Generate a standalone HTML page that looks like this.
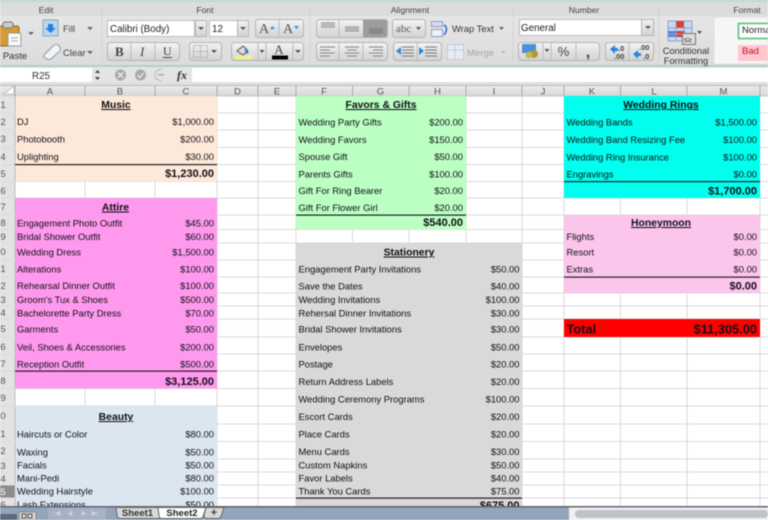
<!DOCTYPE html>
<html><head><meta charset="utf-8"><style>
html,body{margin:0;padding:0;background:#fff;overflow:hidden;width:768px;height:520px}
svg{display:block;filter:blur(.45px)}
text{font-family:"Liberation Sans",sans-serif;font-size:9.4px;fill:#101016}
.r text,text.r{text-anchor:end}
.c text,text.c{text-anchor:middle}
.h text{font-size:9.6px;fill:#555;text-anchor:middle}
.b{font-weight:bold;font-size:11px}
.u{font-weight:bold;font-size:10.4px;text-decoration:underline;text-anchor:middle}
.lab text{font-size:8.6px;fill:#444;text-anchor:middle}
.g line{stroke:#dadada;stroke-width:1}
.btn{fill:url(#bt);stroke:#b4b4b4}
.ln line{stroke:#a8a8a8;stroke-width:1}
</style></head><body>
<svg width="768" height="520" viewBox="0 0 768 520" xmlns="http://www.w3.org/2000/svg">
<defs>
<linearGradient id="rib" x1="0" y1="0" x2="0" y2="1"><stop offset="0" stop-color="#e9e9e9"/><stop offset="1" stop-color="#dcdcdc"/></linearGradient>
<linearGradient id="bt" x1="0" y1="0" x2="0" y2="1"><stop offset="0" stop-color="#f3f3f3"/><stop offset="1" stop-color="#d2d2d2"/></linearGradient>
<linearGradient id="hd" x1="0" y1="0" x2="0" y2="1"><stop offset="0" stop-color="#ececec"/><stop offset="1" stop-color="#d8d8d8"/></linearGradient>
</defs>
<rect width="768" height="520" fill="#fff"/>
<!-- ribbon -->
<rect width="768" height="66" fill="url(#rib)"/>
<rect width="768" height="16" fill="#dcdcdc"/>
<rect width="768" height="1.500" fill="#b9d4bd"/>
<rect y="65" width="768" height="2" fill="#b5cfb8"/>
<g class="lab"><text x="46" y="13">Edit</text><text x="205" y="13">Font</text><text x="410" y="13">Alignment</text><text x="584" y="13">Number</text><text x="747" y="13">Format</text></g>
<g stroke="#bbb" stroke-dasharray="1 2"><line x1="102" y1="8" x2="102" y2="62"/><line x1="310" y1="8" x2="310" y2="62"/><line x1="513" y1="8" x2="513" y2="62"/><line x1="659" y1="8" x2="659" y2="62"/></g>
<!-- paste -->
<rect x="-4" y="26" width="23" height="20" rx="2" fill="#d79a35" stroke="#8a6a2a"/>
<rect x="3" y="22" width="10" height="6" rx="2" fill="#ccc" stroke="#777"/>
<path d="M8 33h12l1 2v11H8z" fill="#fafafa" stroke="#999"/>
<path d="M11 38h7M11 41h7" stroke="#aaa"/>
<path d="M28 32h6l-3 3z" fill="#666"/>
<text x="15" y="59" text-anchor="middle" style="font-size:9.500px;fill:#333">Paste</text>
<!-- fill -->
<rect x="43" y="20" width="15" height="16" rx="1" fill="#bcd7f2" stroke="#8aa"/>
<path d="M48 24h5v4h3l-5.500 5-5.500-5h3z" fill="#2b7fd8"/>
<text x="63" y="32" style="font-size:9.500px;fill:#444">Fill</text>
<path d="M87 27h6l-3 3z" fill="#666"/>
<!-- clear -->
<path d="M44 55l10-10q2-1.500 4 0l2 2q1 2 0 4l-9 8q-2 1-4 0l-3-2q-1-1 0-2z" fill="#f0f3f7" stroke="#8d98a8"/>
<text x="63" y="56" style="font-size:9.500px;fill:#444">Clear</text>
<path d="M87 51h6l-3 3z" fill="#666"/>
<!-- font -->
<rect x="107.500" y="20.500" width="87" height="16" fill="#fff" stroke="#bbb"/><text x="110" y="32" style="font-size:9.800px;fill:#222">Calibri (Body)</text>
<rect x="195.500" y="20.500" width="11" height="16" class="btn"/><path d="M198 27h6l-3 3z" fill="#555"/>
<rect x="209.500" y="20.500" width="28" height="16" fill="#fff" stroke="#bbb"/><text x="212" y="32" style="font-size:9.800px;fill:#222">12</text>
<rect x="237.500" y="20.500" width="11" height="16" class="btn"/><path d="M240 27h6l-3 3z" fill="#555"/>
<rect x="255.500" y="19.500" width="48" height="18" rx="3" class="btn"/><line x1="279" y1="20" x2="279" y2="37" stroke="#bbb"/>
<text x="259" y="33" style="font-family:'Liberation Serif',serif;font-size:14px;fill:#555">A</text><path d="M270 29h5l-2.500-3z" fill="#3a8fd8"/>
<text x="283" y="33" style="font-family:'Liberation Serif',serif;font-size:14px;fill:#555">A</text><path d="M294 26h5l-2.500 3z" fill="#3a8fd8"/>
<rect x="107.500" y="42.500" width="72" height="18" rx="3" class="btn"/><line x1="131" y1="43" x2="131" y2="60" stroke="#bbb"/><line x1="155" y1="43" x2="155" y2="60" stroke="#bbb"/>
<text x="115" y="56" style="font-family:'Liberation Serif',serif;font-size:13px;font-weight:bold;fill:#444">B</text>
<text x="140" y="56" style="font-family:'Liberation Serif',serif;font-size:13px;font-style:italic;fill:#444">I</text>
<text x="163" y="55" style="font-family:'Liberation Serif',serif;font-size:12px;fill:#444">U</text><line x1="163" y1="57.500" x2="172" y2="57.500" stroke="#444"/>
<rect x="189.500" y="42.500" width="32" height="18" rx="3" class="btn"/>
<rect x="193.500" y="45.500" width="14" height="12" fill="none" stroke="#999" stroke-dasharray="1 1"/><path d="M200.500 45v13M193 51.500h15" stroke="#999" stroke-dasharray="1 1"/><path d="M211 50h6l-3 3z" fill="#555"/>
<rect x="231.500" y="42.500" width="72" height="18" rx="3" class="btn"/><line x1="258" y1="43" x2="258" y2="60" stroke="#bbb"/><line x1="266" y1="43" x2="266" y2="60" stroke="#bbb"/><line x1="293" y1="43" x2="293" y2="60" stroke="#bbb"/>
<path d="M237 51l6-5 5 5-5 4z" fill="#ddd" stroke="#555"/><path d="M245 47q4 3 3 7q-3-1-3-3z" fill="#3a7fc4"/><rect x="235" y="55.500" width="17" height="4" fill="#f2f08c"/>
<path d="M259.500 50h5l-2.500 3z" fill="#555"/><path d="M295 50h6l-3 3z" fill="#555"/>
<text x="279" y="54" text-anchor="middle" style="font-family:'Liberation Serif',serif;font-size:13px;fill:#444">A</text><rect x="272" y="55.500" width="16" height="4" fill="#000"/>
<!-- alignment -->
<rect x="316.500" y="19.500" width="71" height="18" rx="3" class="btn"/><rect x="363" y="20" width="24" height="17" fill="#9d9d9d"/><line x1="339" y1="20" x2="339" y2="37" stroke="#bbb"/>
<path d="M321 23h14M321 25h14M321 27h14M345 27h14M345 29h14M345 31h14" stroke="#888"/><path d="M369 29h14M369 31h14M369 33h14" stroke="#777"/>
<rect x="316.500" y="42.500" width="71" height="18" rx="3" class="btn"/><line x1="339" y1="43" x2="339" y2="60" stroke="#bbb"/><line x1="363" y1="43" x2="363" y2="60" stroke="#bbb"/>
<path d="M320 47h15M320 50h10M320 53h15M320 56h10M345 47h14M347 50h10M345 53h14M347 56h10M369 47h14M373 50h10M369 53h14M373 56h10" stroke="#888"/>
<rect x="392.500" y="19.500" width="33" height="18" rx="3" class="btn"/><text x="396" y="32" style="font-family:'Liberation Serif',serif;font-size:11px;fill:#555">abc</text><path d="M416 27h5l-2.500 3z" fill="#555"/>
<rect x="431.500" y="21.500" width="11" height="5" fill="#d5dff0" stroke="#8b9ec0"/><rect x="431.500" y="29.500" width="11" height="7" fill="#eef2f8" stroke="#8b9ec0"/><path d="M444 25q5 3 0 10" fill="none" stroke="#2b6fc8" stroke-width="1.500"/>
<text x="452" y="32" style="font-size:9.400px;fill:#333">Wrap Text</text><path d="M499 27h5l-2.500 3z" fill="#666"/>
<rect x="393.500" y="42.500" width="48" height="18" rx="3" class="btn"/><line x1="417" y1="43" x2="417" y2="60" stroke="#bbb"/>
<path d="M396 51l5-4v8z" fill="#2b86dc"/><path d="M402 47h12M402 50h12M402 53h12M402 56h12M425 47h12M425 50h12M425 53h12M425 56h12" stroke="#777"/><path d="M424 51l-5-4v8z" fill="#2b86dc"/>
<rect x="447.500" y="44.500" width="16" height="15" fill="#e8edf3" stroke="#c2cbd5"/><path d="M455 45v14M448 50h15" stroke="#c2cbd5"/>
<text x="467" y="56" style="font-size:9.500px;fill:#a5a5a5">Merge</text><path d="M501 51h5l-2.500 3z" fill="#bbb"/>
<!-- number -->
<rect x="519.500" y="19.500" width="122" height="16" fill="#fff" stroke="#bbb"/><text x="521" y="31" style="font-size:9.800px;fill:#222">General</text>
<rect x="641.500" y="19.500" width="12" height="16" class="btn"/><path d="M645 26h6l-3 3z" fill="#555"/>
<rect x="518.500" y="42.500" width="81" height="18" rx="3" class="btn"/><line x1="543" y1="43" x2="543" y2="60" stroke="#bbb"/><line x1="551" y1="43" x2="551" y2="60" stroke="#bbb"/><line x1="576" y1="43" x2="576" y2="60" stroke="#bbb"/>
<rect x="522" y="44" width="14" height="9" fill="#4b90d8"/><circle cx="534" cy="54" r="4" fill="#a99a3e"/><circle cx="529" cy="55" r="3.500" fill="#c5b55a"/>
<path d="M544.500 49h5l-2.500 3z" fill="#555"/>
<text x="563.500" y="56" text-anchor="middle" style="font-size:13px;fill:#444">%</text><text x="588" y="57" text-anchor="middle" style="font-size:16px;font-weight:bold;fill:#444">,</text>
<rect x="605.500" y="42.500" width="48" height="18" rx="3" class="btn"/><line x1="629" y1="43" x2="629" y2="60" stroke="#bbb"/>
<path d="M610 49l5-4v3h3v3h-3v3z" fill="#2b86dc"/><text x="618" y="51" style="font-size:7.500px;font-weight:bold;fill:#444">.0</text><text x="614" y="59" style="font-size:7.500px;font-weight:bold;fill:#444">.00</text>
<text x="639" y="50" style="font-size:7.500px;font-weight:bold;fill:#444">.00</text><path d="M633 54l5-4v3h3v3h-3v3z" fill="#2b86dc"/><text x="643" y="59" style="font-size:7.500px;font-weight:bold;fill:#444">.0</text>
<!-- CF -->
<rect x="668" y="21" width="24" height="20" fill="#c8d8f0" stroke="#8ba4cc"/><rect x="676" y="21" width="8" height="7" fill="#e23b2e"/><rect x="668" y="31" width="8" height="6" fill="#5a80d8"/><rect x="676" y="31" width="9" height="6" fill="#e23b2e"/><path d="M668 28h24M668 34h24M676 21v20M684 21v20" stroke="#8ba4cc" fill="none"/>
<rect x="682.500" y="33.500" width="13" height="11" fill="#ddd" stroke="#777"/><text x="684" y="42" style="font-size:7px;fill:#333">≤≥</text><path d="M697 31h5l-2.500 3z" fill="#555"/>
<text x="686" y="54" text-anchor="middle" style="font-size:9.300px;fill:#333">Conditional</text><text x="686" y="64" text-anchor="middle" style="font-size:9.300px;fill:#333">Formatting</text>
<rect x="714" y="17" width="54" height="47" fill="#f6f6f6" stroke="#ddd"/>
<rect x="738.500" y="23.500" width="32" height="15" fill="#fff" stroke="#4fc06f" stroke-width="1.500"/><text x="742" y="33" style="font-size:9.500px;fill:#222">Norma</text>
<rect x="738" y="45" width="32" height="16" fill="#ffc7ce"/><text x="742" y="54" style="font-size:9.500px;fill:#c0102a">Bad</text>
<!-- formula bar -->
<rect y="67" width="768" height="19" fill="#e4e4e4"/>
<rect x="0" y="68" width="92" height="14" fill="#fff"/>
<text x="41" y="79" text-anchor="middle" style="font-size:9.800px;fill:#333">R25</text>
<path d="M95 73l2.500-3 2.500 3zM95 77l2.500 3 2.500-3z" fill="#444"/>
<circle cx="120.500" cy="75" r="5.500" fill="#a9a9a9"/><path d="M118 72.500l5 5M123 72.500l-5 5" stroke="#eee" stroke-width="1.300"/>
<circle cx="140.500" cy="75" r="5.500" fill="#a9a9a9"/><path d="M137.500 75l2.500 2.500 3.500-4.500" stroke="#eee" stroke-width="1.300" fill="none"/>
<path d="M162 69q-7 1-7 6t7 6" fill="none" stroke="#bbb"/><rect x="158" y="74" width="6" height="1.500" fill="#aaa"/>
<text x="177" y="79" style="font-family:'Liberation Serif',serif;font-size:12px;font-style:italic;font-weight:bold;fill:#333">fx</text>
<rect x="192" y="68" width="576" height="14" fill="#fff"/>
<!-- col header -->
<rect y="82" width="768" height="4" fill="#e0e0e0"/>
<rect y="86" width="768" height="10" fill="url(#hd)"/><rect y="85" width="768" height="1" fill="#b9b9b9"/><rect y="95.500" width="768" height="1" fill="#c4c4c4"/>
<path d="M4 94h10V86z" fill="#fff" stroke="#aaa" stroke-width=".6"/>
<g class="ln"><line x1="15" y1="86" x2="15" y2="96"/><line x1="85" y1="86" x2="85" y2="96"/><line x1="155" y1="86" x2="155" y2="96"/><line x1="217" y1="86" x2="217" y2="96"/><line x1="258" y1="86" x2="258" y2="96"/><line x1="296" y1="86" x2="296" y2="96"/><line x1="352.500" y1="86" x2="352.500" y2="96"/><line x1="409" y1="86" x2="409" y2="96"/><line x1="466" y1="86" x2="466" y2="96"/><line x1="522" y1="86" x2="522" y2="96"/><line x1="564" y1="86" x2="564" y2="96"/><line x1="620.500" y1="86" x2="620.500" y2="96"/><line x1="687" y1="86" x2="687" y2="96"/><line x1="760" y1="86" x2="760" y2="96"/></g>
<g class="h"><text x="50" y="94.500">A</text><text x="120" y="94.500">B</text><text x="186" y="94.500">C</text><text x="237.500" y="94.500">D</text><text x="277" y="94.500">E</text><text x="324" y="94.500">F</text><text x="380.500" y="94.500">G</text><text x="437.500" y="94.500">H</text><text x="494" y="94.500">I</text><text x="543" y="94.500">J</text><text x="592" y="94.500">K</text><text x="654" y="94.500">L</text><text x="723.500" y="94.500">M</text></g>
<!-- row headers -->
<rect y="96" width="15" height="410" fill="#e3e3e3"/>
<rect y="485" width="15" height="13" fill="#8c8c8c"/>
<line x1="15" y1="96" x2="15" y2="506" stroke="#bdbdbd"/>
<!-- grid -->
<g class="g">
<line x1="0" y1="113" x2="768" y2="113"/><line x1="0" y1="130" x2="768" y2="130"/><line x1="0" y1="147.500" x2="768" y2="147.500"/><line x1="0" y1="164.500" x2="768" y2="164.500"/><line x1="0" y1="181.500" x2="768" y2="181.500"/><line x1="0" y1="198" x2="768" y2="198"/><line x1="0" y1="215" x2="768" y2="215"/><line x1="0" y1="229.500" x2="768" y2="229.500"/><line x1="0" y1="243" x2="768" y2="243"/><line x1="0" y1="260" x2="768" y2="260"/><line x1="0" y1="277" x2="768" y2="277"/><line x1="0" y1="293" x2="768" y2="293"/><line x1="0" y1="306" x2="768" y2="306"/><line x1="0" y1="319" x2="768" y2="319"/><line x1="0" y1="337" x2="768" y2="337"/><line x1="0" y1="354" x2="768" y2="354"/><line x1="0" y1="371" x2="768" y2="371"/><line x1="0" y1="388.500" x2="768" y2="388.500"/><line x1="0" y1="406" x2="768" y2="406"/><line x1="0" y1="424" x2="768" y2="424"/><line x1="0" y1="441.500" x2="768" y2="441.500"/><line x1="0" y1="459" x2="768" y2="459"/><line x1="0" y1="472" x2="768" y2="472"/><line x1="0" y1="485" x2="768" y2="485"/><line x1="0" y1="498" x2="768" y2="498"/>
<line x1="85" y1="96" x2="85" y2="506"/><line x1="155" y1="96" x2="155" y2="506"/><line x1="217" y1="96" x2="217" y2="506"/><line x1="258" y1="96" x2="258" y2="506"/><line x1="296" y1="96" x2="296" y2="506"/><line x1="352.500" y1="96" x2="352.500" y2="506"/><line x1="409" y1="96" x2="409" y2="506"/><line x1="466" y1="96" x2="466" y2="506"/><line x1="522" y1="96" x2="522" y2="506"/><line x1="564" y1="96" x2="564" y2="506"/><line x1="620.500" y1="96" x2="620.500" y2="506"/><line x1="687" y1="96" x2="687" y2="506"/><line x1="760" y1="96" x2="760" y2="506"/>
</g>
<!-- fills -->
<rect x="15.500" y="96" width="201.500" height="85.500" fill="#fde9d9"/>
<rect x="15.500" y="198" width="201.500" height="190.500" fill="#ff99ee"/>
<rect x="15.500" y="406" width="201.500" height="100" fill="#dce6f1"/>
<rect x="296" y="96" width="170" height="133.500" fill="#bbffc3"/>
<rect x="296" y="243" width="226" height="263" fill="#d9d9d9"/>
<rect x="564" y="96" width="196" height="102" fill="#00ffee"/>
<rect x="564" y="215" width="196" height="78" fill="#fcc5ec"/>
<rect x="564" y="319" width="196" height="18" fill="#ff0000"/>
<g fill="#222"><rect x="15" y="164" width="202" height="1.200"/><rect x="15" y="370.500" width="202" height="1.200"/><rect x="296" y="214.500" width="170" height="1.200"/><rect x="296" y="497.500" width="226" height="1.200"/><rect x="564" y="181" width="196" height="1.200"/><rect x="564" y="276.500" width="196" height="1.200"/></g>
<!-- row numbers -->
<g class="h"><text x="3" y="108">1</text><text x="3" y="125">2</text><text x="3" y="142">3</text><text x="3" y="160">4</text><text x="3" y="177">5</text><text x="3" y="194">6</text><text x="3" y="210">7</text><text x="3" y="226">8</text><text x="3" y="240">9</text><text x="3" y="255">0</text><text x="3" y="272">1</text><text x="3" y="289">2</text><text x="3" y="303">3</text><text x="3" y="316">4</text><text x="3" y="332">5</text><text x="3" y="350">6</text><text x="3" y="367">7</text><text x="3" y="384">8</text><text x="3" y="401">9</text><text x="3" y="419">0</text><text x="3" y="437">1</text><text x="3" y="454">2</text><text x="3" y="469">3</text><text x="3" y="482">4</text><text x="3" y="495" style="fill:#fff">5</text><text x="3" y="508">6</text></g>
<!-- Music -->
<text x="116" y="108" class="u">Music</text>
<text x="17" y="125">DJ</text><text x="214" y="125" class="r">$1,000.00</text>
<text x="17" y="142.500">Photobooth</text><text x="214" y="142.500" class="r">$200.00</text>
<text x="17" y="160">Uplighting</text><text x="214" y="160" class="r">$30.00</text>
<text x="214" y="177" class="r b">$1,230.00</text>
<!-- Attire -->
<text x="115.500" y="210.500" class="u">Attire</text>
<text x="17" y="226.500">Engagement Photo Outfit</text><text x="214" y="226.500" class="r">$45.00</text>
<text x="17" y="240">Bridal Shower Outfit</text><text x="214" y="240" class="r">$60.00</text>
<text x="17" y="255.500">Wedding Dress</text><text x="214" y="255.500" class="r">$1,500.00</text>
<text x="17" y="272.500">Alterations</text><text x="214" y="272.500" class="r">$100.00</text>
<text x="17" y="289">Rehearsal Dinner Outfit</text><text x="214" y="289" class="r">$100.00</text>
<text x="17" y="303">Groom's Tux &amp; Shoes</text><text x="214" y="303" class="r">$500.00</text>
<text x="17" y="316.500">Bachelorette Party Dress</text><text x="214" y="316.500" class="r">$70.00</text>
<text x="17" y="332.500">Garments</text><text x="214" y="332.500" class="r">$50.00</text>
<text x="17" y="350.500">Veil, Shoes &amp; Accessories</text><text x="214" y="350.500" class="r">$200.00</text>
<text x="17" y="367.500">Reception Outfit</text><text x="214" y="367.500" class="r">$500.00</text>
<text x="214" y="385" class="r b">$3,125.00</text>
<!-- Beauty -->
<text x="116" y="420" class="u">Beauty</text>
<text x="17" y="437.500">Haircuts or Color</text><text x="214" y="437.500" class="r">$80.00</text>
<text x="17" y="455.500">Waxing</text><text x="214" y="455.500" class="r">$50.00</text>
<text x="17" y="468.500">Facials</text><text x="214" y="468.500" class="r">$50.00</text>
<text x="17" y="481.500">Mani-Pedi</text><text x="214" y="481.500" class="r">$80.00</text>
<text x="17" y="494.500">Wedding Hairstyle</text><text x="214" y="494.500" class="r">$100.00</text>
<text x="17" y="508">Lash Extensions</text><text x="214" y="508" class="r">$50.00</text>
<!-- Favors -->
<text x="381" y="108" class="u">Favors &amp; Gifts</text>
<text x="298.500" y="125.500">Wedding Party Gifts</text><text x="463" y="125.500" class="r">$200.00</text>
<text x="298.500" y="143">Wedding Favors</text><text x="463" y="143" class="r">$150.00</text>
<text x="298.500" y="160">Spouse Gift</text><text x="463" y="160" class="r">$50.00</text>
<text x="298.500" y="177.500">Parents Gifts</text><text x="463" y="177.500" class="r">$100.00</text>
<text x="298.500" y="194">Gift For Ring Bearer</text><text x="463" y="194" class="r">$20.00</text>
<text x="298.500" y="211">Gift For Flower Girl</text><text x="463" y="211" class="r">$20.00</text>
<text x="463" y="226" class="r b">$540.00</text>
<!-- Stationery -->
<text x="409" y="255.500" class="u">Stationery</text>
<text x="298.500" y="272.500">Engagement Party Invitations</text><text x="519.500" y="272.500" class="r">$50.00</text>
<text x="298.500" y="289.500">Save the Dates</text><text x="519.500" y="289.500" class="r">$40.00</text>
<text x="298.500" y="303">Wedding Invitations</text><text x="519.500" y="303" class="r">$100.00</text>
<text x="298.500" y="316.500">Rehersal Dinner Invitations</text><text x="519.500" y="316.500" class="r">$30.00</text>
<text x="298.500" y="332.500">Bridal Shower Invitations</text><text x="519.500" y="332.500" class="r">$30.00</text>
<text x="298.500" y="350.500">Envelopes</text><text x="519.500" y="350.500" class="r">$50.00</text>
<text x="298.500" y="367.500">Postage</text><text x="519.500" y="367.500" class="r">$20.00</text>
<text x="298.500" y="385">Return Address Labels</text><text x="519.500" y="385" class="r">$20.00</text>
<text x="298.500" y="402.500">Wedding Ceremony Programs</text><text x="519.500" y="402.500" class="r">$100.00</text>
<text x="298.500" y="420">Escort Cards</text><text x="519.500" y="420" class="r">$20.00</text>
<text x="298.500" y="437.500">Place Cards</text><text x="519.500" y="437.500" class="r">$20.00</text>
<text x="298.500" y="455">Menu Cards</text><text x="519.500" y="455" class="r">$30.00</text>
<text x="298.500" y="468.500">Custom Napkins</text><text x="519.500" y="468.500" class="r">$50.00</text>
<text x="298.500" y="481.500">Favor Labels</text><text x="519.500" y="481.500" class="r">$40.00</text>
<text x="298.500" y="494.500">Thank You Cards</text><text x="519.500" y="494.500" class="r">$75.00</text>
<text x="519.500" y="509" class="r b">$675.00</text>
<!-- Rings -->
<text x="661" y="108" class="u">Wedding Rings</text>
<text x="566.500" y="125.500">Wedding Bands</text><text x="757" y="125.500" class="r">$1,500.00</text>
<text x="566.500" y="143">Wedding Band Resizing Fee</text><text x="757" y="143" class="r">$100.00</text>
<text x="566.500" y="160.500">Wedding Ring Insurance</text><text x="757" y="160.500" class="r">$100.00</text>
<text x="566.500" y="177.500">Engravings</text><text x="757" y="177.500" class="r">$0.00</text>
<text x="757" y="194.500" class="r b">$1,700.00</text>
<!-- Honeymoon -->
<text x="661" y="226" class="u">Honeymoon</text>
<text x="566.500" y="240">Flights</text><text x="757" y="240" class="r">$0.00</text>
<text x="566.500" y="255.500">Resort</text><text x="757" y="255.500" class="r">$0.00</text>
<text x="566.500" y="272.500">Extras</text><text x="757" y="272.500" class="r">$0.00</text>
<text x="757" y="289.500" class="r b">$0.00</text>
<!-- Total -->
<text x="566.500" y="333.500" style="font-weight:bold;font-size:12.800px">Total</text>
<text x="757" y="333.500" class="r" style="font-weight:bold;font-size:12.800px">$11,305.00</text>
<!-- bottom bar -->
<rect y="506" width="768" height="14" fill="#93a5bb"/>
<rect y="506" width="768" height="1.500" fill="#5f6670"/>
<rect x="0" y="514" width="17" height="6" fill="#5c6a7c"/>
<rect x="19" y="512" width="17" height="8" fill="#d8d8d8" stroke="#888"/>
<path d="M22 514h4v4h-4zM28 514h4v4h-4z" fill="none" stroke="#555"/>
<rect x="48" y="507.500" width="58" height="12" fill="#a4b2c4"/>
<path d="M53 511v5M60 511l-5 2.500 5 2.500zM72 511l-4 2.500 4 2.500zM82 511l4 2.500-4 2.500zM92 511l5 2.500-5 2.500zM98 511v5" fill="#c8d0da" stroke="#c8d0da" stroke-width=".6"/>
<path d="M116 507.500h42l3 8q1 3-3 3h-38q-2 0-3-3z" fill="#d8d8d8" stroke="#666"/>
<path d="M158 507.500h48l-3 9q-1 2-3 2h-38q-3 0-3-3z" fill="#fff" stroke="#666"/>
<path d="M206 507.500h18l-3 9q-1 2-3 2h-11q-3 0-3-3z" fill="#d8d8d8" stroke="#666"/>
<text x="137.500" y="516" text-anchor="middle" style="font-size:9.500px;font-weight:bold;fill:#333">Sheet1</text>
<text x="182" y="516" text-anchor="middle" style="font-size:9.500px;font-weight:bold;fill:#222">Sheet2</text>
<text x="214" y="516" text-anchor="middle" style="font-size:11px;font-weight:bold;fill:#444">+</text>
<rect x="569" y="507.500" width="199" height="12.500" fill="#eef0f2"/>
<rect x="575" y="510" width="193" height="8" rx="4" fill="#bfc3c7"/>
</svg>
</body></html>
